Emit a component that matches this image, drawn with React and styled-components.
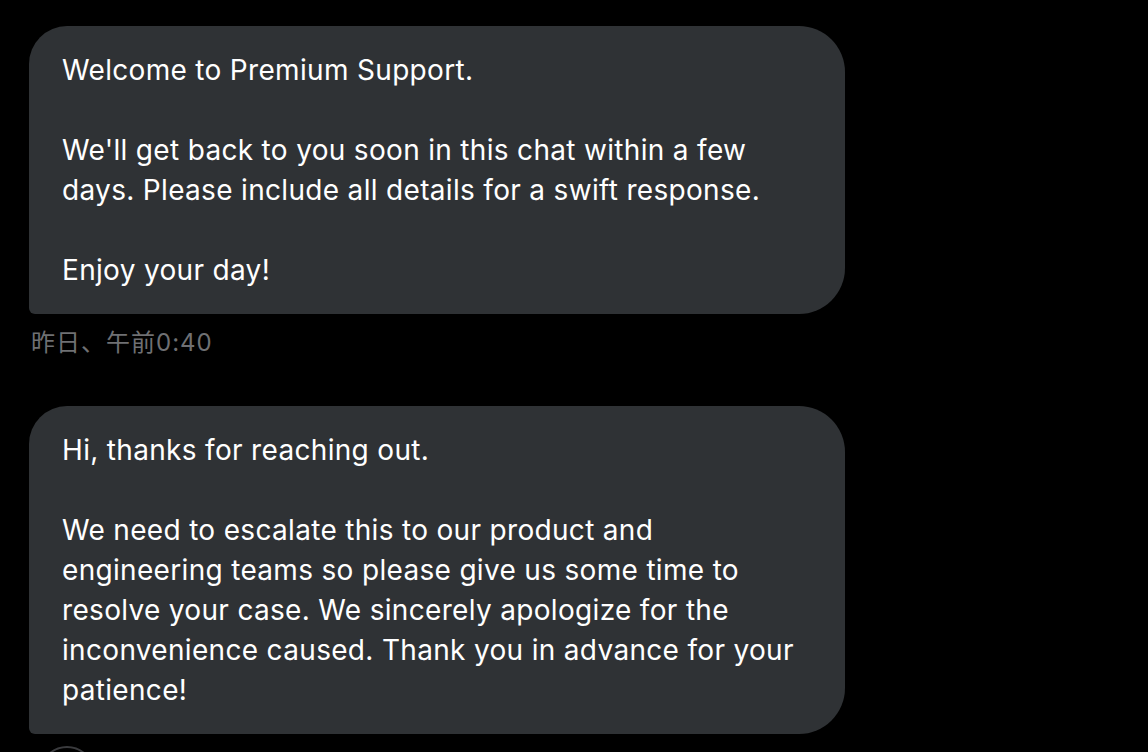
import styled, { createGlobalStyle } from 'styled-components';

const GlobalStyle = createGlobalStyle`
  html, body {
    margin: 0;
    padding: 0;
    background: #000;
  }
  body {
    font-family: Inter, "Noto Sans", "Noto Sans CJK JP", sans-serif;
    -webkit-font-smoothing: antialiased;
  }
`;

const Thread = styled.div`
  height: 752px;
  overflow: hidden;
  padding: 26px 0 0 29px;
  box-sizing: border-box;
  display: flex;
  flex-direction: column;
  align-items: flex-start;
`;

const Bubble = styled.div`
  width: 816px;
  box-sizing: border-box;
  padding: 24px 33px 24px;
  background: #2f3235;
  color: #fff;
  border-radius: 38px 46px 46px 6px;
  font-size: 28px;
  line-height: 40px;
  letter-spacing: 0.32px;
`;

const Line = styled.div`
  min-height: 40px;
  white-space: nowrap;
`;

const Stamp = styled.div`
  margin: 12px 0 46px 2px;
  font-family: Inter, "Noto Sans CJK JP", sans-serif;
  font-size: 24px;
  line-height: 34px;
  letter-spacing: 1px;
  color: #6f7073;
`;

const Avatar = styled.div`
  margin: 12px 0 0 10px;
  width: 52px;
  height: 52px;
  border-radius: 50%;
  border: 2px solid #3a3b3e;
  flex-shrink: 0;
`;

const messages = [
  {
    lines: [
      'Welcome to Premium Support.',
      '',
      "We'll get back to you soon in this chat within a few",
      'days. Please include all details for a swift response.',
      '',
      'Enjoy your day!',
    ],
    time: '昨日、午前0:40',
  },
  {
    lines: [
      'Hi, thanks for reaching out.',
      '',
      'We need to escalate this to our product and',
      'engineering teams so please give us some time to',
      'resolve your case. We sincerely apologize for the',
      'inconvenience caused. Thank you in advance for your',
      'patience!',
    ],
  },
];

const App = () => (
  <>
    <GlobalStyle />
    <Thread>
      {messages.map((m, i) => (
        <div key={i}>
          <Bubble>
            {m.lines.map((l, j) => <Line key={j}>{l}</Line>)}
          </Bubble>
          {m.time && <Stamp>{m.time}</Stamp>}
        </div>
      ))}
      <Avatar />
    </Thread>
  </>
);

export default App;
